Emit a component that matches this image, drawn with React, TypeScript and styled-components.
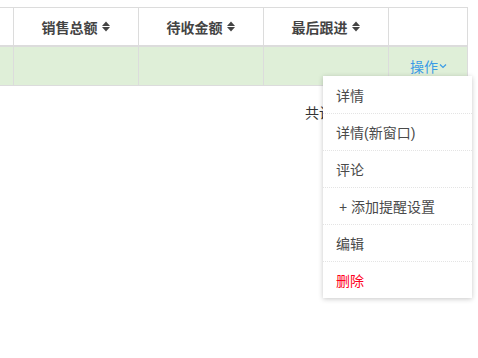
import React from "react";
import styled, { createGlobalStyle } from "styled-components";

const GlobalStyle = createGlobalStyle`
  html, body {
    margin: 0;
    padding: 0;
    background: #fff;
    font-family: "Liberation Sans", "Noto Sans CJK SC", sans-serif;
    font-size: 14px;
    color: #333;
  }
`;

const columns = ["销售总额", "待收金额", "最后跟进"];
const colWidths = [13, 125, 125, 125, 79];

const menuItems = [
  { label: "详情" },
  { label: "详情(新窗口)" },
  { label: "评论" },
  { label: "+ 添加提醒设置", indent: true },
  { label: "编辑" },
  { label: "删除", danger: true },
];

const SortIcon = () => (
  <svg width="8" height="11" viewBox="0 0 8 11" style={{ marginLeft: 4 }}>
    <path d="M4 0.5 L8 5 L0 5 Z" fill="#444" />
    <path d="M4 10.5 L8 6 L0 6 Z" fill="#444" />
  </svg>
);

const App = () => {
  return (
    <Page>
      <GlobalStyle />
      <Table>
        <colgroup>
          {colWidths.map((w, i) => (
            <col key={i} style={{ width: w }} />
          ))}
        </colgroup>
        <thead>
          <tr>
            <Th />
            {columns.map((c) => (
              <Th key={c}>
                <HeadLabel>
                  {c}
                  <SortIcon />
                </HeadLabel>
              </Th>
            ))}
            <Th />
          </tr>
        </thead>
        <tbody>
          <Row>
            <Td />
            <Td />
            <Td />
            <Td />
            <Td>
              <ActionLink>
                操作
                <svg width="8" height="6" viewBox="0 0 8 6" style={{ marginLeft: 1 }}>
                  <path d="M1 1.5 L4 4.5 L7 1.5" stroke="#3a9be6" strokeWidth="1.2" fill="none" />
                </svg>
              </ActionLink>
            </Td>
          </Row>
        </tbody>
      </Table>
      <Footer>共计 1 条</Footer>
      <Menu>
        {menuItems.map((m, i) => (
          <MenuItem key={m.label} $danger={m.danger} $indent={m.indent} $first={i === 0}>
            {m.label}
          </MenuItem>
        ))}
      </Menu>
    </Page>
  );
};

const Page = styled.div`
  position: relative;
  width: 478px;
  height: 358px;
  padding-top: 7px;
  box-sizing: border-box;
`;

const Table = styled.table`
  border-collapse: collapse;
  table-layout: fixed;
  width: 467px;
  border-top: 1px solid #dcdcdc;
`;

const Th = styled.th`
  height: 37px;
  padding: 0;
  border-right: 1px solid #dcdcdc;
  border-bottom: 2px solid #dcdcdc;
  font-weight: bold;
  color: #444;
  font-size: 14px;
  text-align: center;
`;

const HeadLabel = styled.span`
  display: inline-flex;
  align-items: center;
`;

const Row = styled.tr`
  background: #dfefd8;
`;

const Td = styled.td`
  height: 38px;
  padding: 0;
  border-right: 1px solid #dcdcdc;
  border-bottom: 1px solid #dcdcdc;
  text-align: center;
`;

const ActionLink = styled.span`
  display: inline-flex;
  align-items: center;
  padding-left: 2px;
  color: #3a9be6;
  font-size: 14px;
  cursor: pointer;
`;

const Footer = styled.div`
  padding: 16px 0 0 305px;
  color: #333;
  font-size: 14px;
`;

const Menu = styled.div`
  position: absolute;
  left: 323px;
  top: 76px;
  width: 149px;
  background: #fff;
  box-shadow: 0 1px 5px rgba(0, 0, 0, 0.22);
  padding: 1px 0 0;
`;

const MenuItem = styled.div<{ $danger?: boolean; $indent?: boolean; $first?: boolean }>`
  height: 36px;
  line-height: 38px;
  padding-left: ${(p) => (p.$indent ? 16 : 13)}px;
  border-top: ${(p) => (p.$first ? "none" : "1px dotted #e4e4e4")};
  color: ${(p) => (p.$danger ? "#ff0022" : "#4a4a4a")};
  font-size: 14px;
  cursor: pointer;
`;

export default App;
